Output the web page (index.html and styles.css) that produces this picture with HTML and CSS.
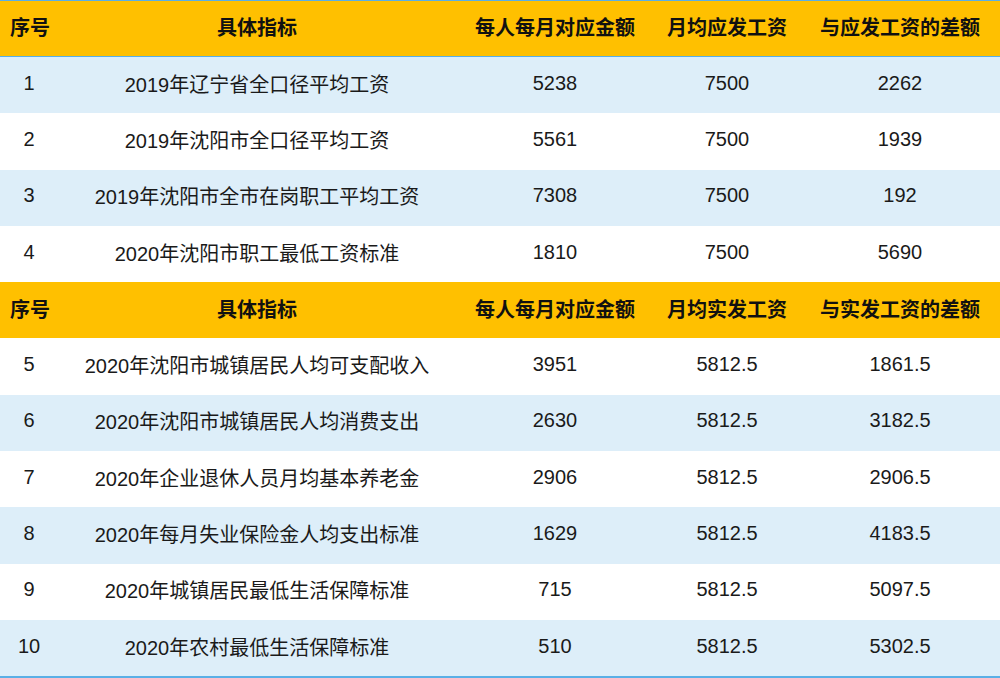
FILE: index.html
```html
<!DOCTYPE html>
<html lang="zh-CN">
<head>
<meta charset="utf-8">
<title>工资对比表</title>
<link rel="stylesheet" href="styles.css">
</head>
<body>
<div class="sheet">
  <div class="row head first">
    <div class="c c1 left">序号</div><div class="c c2">具体指标</div><div class="c c3">每人每月对应金额</div><div class="c c4">月均应发工资</div><div class="c c5">与应发工资的差额</div>
  </div>
  <div class="row blue"><div class="c c1">1</div><div class="c c2">2019年辽宁省全口径平均工资</div><div class="c c3">5238</div><div class="c c4">7500</div><div class="c c5">2262</div></div>
  <div class="row"><div class="c c1">2</div><div class="c c2">2019年沈阳市全口径平均工资</div><div class="c c3">5561</div><div class="c c4">7500</div><div class="c c5">1939</div></div>
  <div class="row blue"><div class="c c1">3</div><div class="c c2">2019年沈阳市全市在岗职工平均工资</div><div class="c c3">7308</div><div class="c c4">7500</div><div class="c c5">192</div></div>
  <div class="row"><div class="c c1">4</div><div class="c c2">2020年沈阳市职工最低工资标准</div><div class="c c3">1810</div><div class="c c4">7500</div><div class="c c5">5690</div></div>
  <div class="row head">
    <div class="c c1 left">序号</div><div class="c c2">具体指标</div><div class="c c3">每人每月对应金额</div><div class="c c4">月均实发工资</div><div class="c c5">与实发工资的差额</div>
  </div>
  <div class="row"><div class="c c1">5</div><div class="c c2">2020年沈阳市城镇居民人均可支配收入</div><div class="c c3">3951</div><div class="c c4">5812.5</div><div class="c c5">1861.5</div></div>
  <div class="row blue"><div class="c c1">6</div><div class="c c2">2020年沈阳市城镇居民人均消费支出</div><div class="c c3">2630</div><div class="c c4">5812.5</div><div class="c c5">3182.5</div></div>
  <div class="row"><div class="c c1">7</div><div class="c c2">2020年企业退休人员月均基本养老金</div><div class="c c3">2906</div><div class="c c4">5812.5</div><div class="c c5">2906.5</div></div>
  <div class="row blue"><div class="c c1">8</div><div class="c c2">2020年每月失业保险金人均支出标准</div><div class="c c3">1629</div><div class="c c4">5812.5</div><div class="c c5">4183.5</div></div>
  <div class="row"><div class="c c1">9</div><div class="c c2">2020年城镇居民最低生活保障标准</div><div class="c c3">715</div><div class="c c4">5812.5</div><div class="c c5">5097.5</div></div>
  <div class="row blue last"><div class="c c1">10</div><div class="c c2">2020年农村最低生活保障标准</div><div class="c c3">510</div><div class="c c4">5812.5</div><div class="c c5">5302.5</div></div>
</div>
</body>
</html>
```
FILE: styles.css
```css
html, body {
  margin: 0;
  padding: 0;
  background: #ffffff;
}
.sheet {
  width: 1000px;
  height: 678px;
  display: flex;
  flex-direction: column;
  font-family: "Liberation Sans", Arial, "Noto Sans CJK SC", sans-serif;
  font-size: 20px;
  color: #1a1a1a;
  border-top: 1px solid #5aafe6;
  border-bottom: 2px solid #5aafe6;
  box-sizing: border-box;
}
.row {
  display: grid;
  grid-template-columns: 58px 398px 198px 146px 200px;
  height: 56.5px;
  align-items: center;
  background: #ffffff;
}
.row.blue {
  background: #ddeef9;
}
.row.head {
  background: #ffc000;
  font-weight: bold;
  color: #111;
  height: 56px;
}
.row.first {
  height: 55px;
  border-bottom: 1px solid #5aafe6;
}
.row.last {
  height: 56px;
}
.c {
  text-align: center;
  white-space: nowrap;
  padding-bottom: 4px;
}
.c.left {
  text-align: left;
  padding-left: 10px;
}
```
